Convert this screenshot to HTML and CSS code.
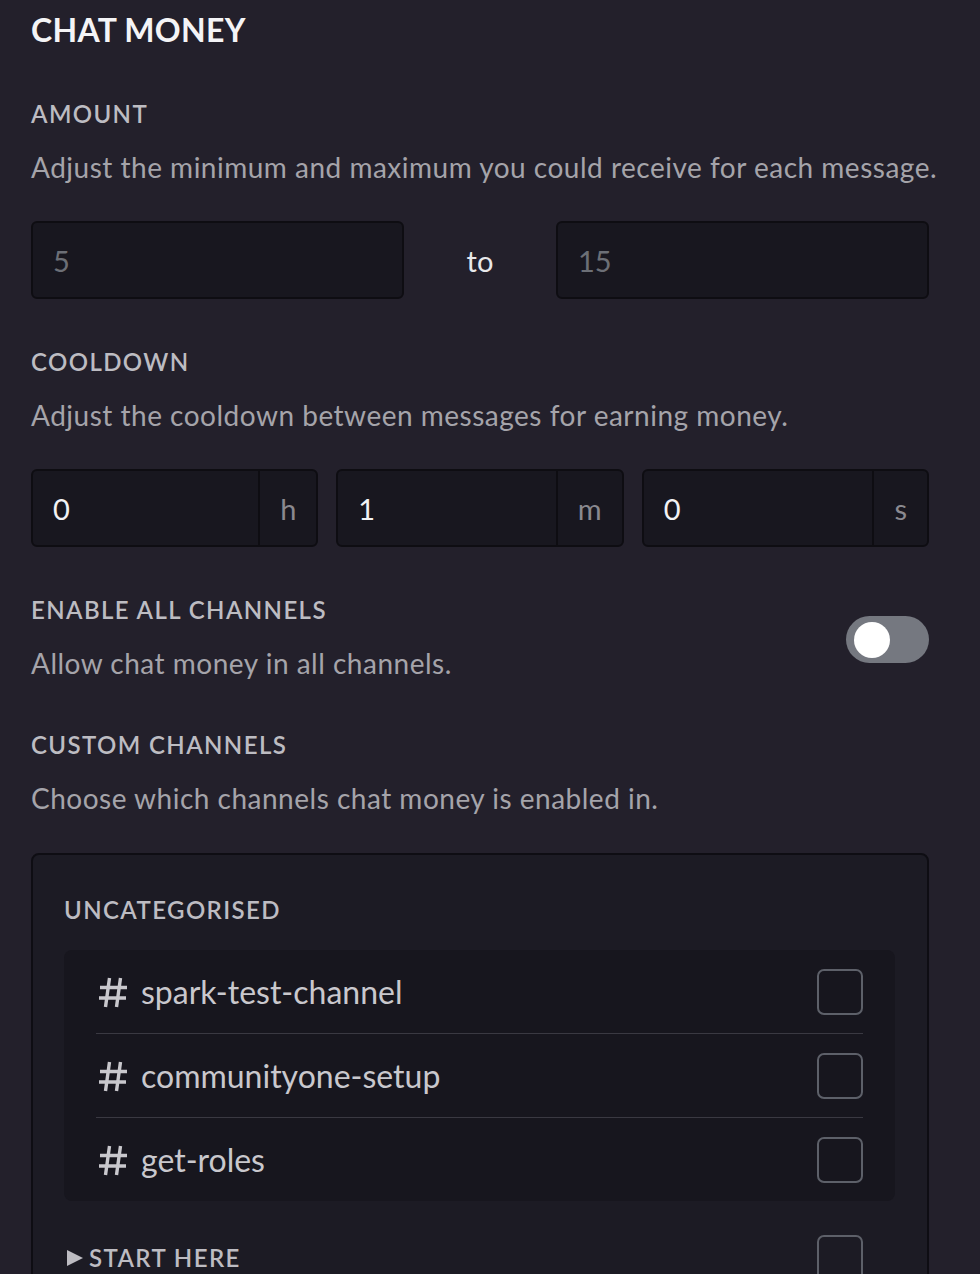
FILE: index.html
```html
<!DOCTYPE html>
<html lang="en">
<head>
<meta charset="utf-8">
<title>Chat Money</title>
<link rel="stylesheet" href="styles.css">
</head>
<body>
<div class="page">
  <h1 class="title">CHAT MONEY</h1>

  <section class="section first">
    <h2 class="label">AMOUNT</h2>
    <p class="desc">Adjust the minimum and maximum you could receive for each message.</p>
    <div class="range">
      <div class="field placeholder">5</div>
      <div class="to">to</div>
      <div class="field placeholder">15</div>
    </div>
  </section>

  <section class="section">
    <h2 class="label">COOLDOWN</h2>
    <p class="desc">Adjust the cooldown between messages for earning money.</p>
    <div class="times">
      <div class="group"><div class="gval">0</div><div class="gsuf">h</div></div>
      <div class="group"><div class="gval">1</div><div class="gsuf">m</div></div>
      <div class="group"><div class="gval">0</div><div class="gsuf">s</div></div>
    </div>
  </section>

  <section class="section toggle-row">
    <div class="toggle-text">
      <h2 class="label">ENABLE ALL CHANNELS</h2>
      <p class="desc last">Allow chat money in all channels.</p>
    </div>
    <div class="toggle"><div class="knob"></div></div>
  </section>

  <section class="section custom">
    <h2 class="label">CUSTOM CHANNELS</h2>
    <p class="desc">Choose which channels chat money is enabled in.</p>
    <div class="panel">
      <h3 class="cat">UNCATEGORISED</h3>
      <div class="list">
        <div class="row">
          <div class="chan"><svg class="hash" width="30" height="31" viewBox="0 0 30 31"><path d="M11.5 1 L7.5 30 M22.5 1 L18.5 30 M2 10.5 H29 M1 21 H28" stroke="#c9c8cd" stroke-width="3.4" fill="none"/></svg><span>spark-test-channel</span></div>
          <div class="check"></div>
        </div>
        <div class="row">
          <div class="chan"><svg class="hash" width="30" height="31" viewBox="0 0 30 31"><path d="M11.5 1 L7.5 30 M22.5 1 L18.5 30 M2 10.5 H29 M1 21 H28" stroke="#c9c8cd" stroke-width="3.4" fill="none"/></svg><span>communityone-setup</span></div>
          <div class="check"></div>
        </div>
        <div class="row">
          <div class="chan"><svg class="hash" width="30" height="31" viewBox="0 0 30 31"><path d="M11.5 1 L7.5 30 M22.5 1 L18.5 30 M2 10.5 H29 M1 21 H28" stroke="#c9c8cd" stroke-width="3.4" fill="none"/></svg><span>get-roles</span></div>
          <div class="check"></div>
        </div>
      </div>
      <div class="catrow">
        <div class="cat cat-collapsed"><svg class="tri" width="16" height="16" viewBox="0 0 16 16"><path d="M0 0 L16 8 L0 16 Z" fill="#bdbcc2"/></svg><span>START HERE</span></div>
        <div class="check"></div>
      </div>
    </div>
  </section>
</div>
</body>
</html>
```

FILE: styles.css
```css
html, body {
  margin: 0;
  padding: 0;
  background: #23202b;
}

body {
  font-family: Lato, "Open Sans", "DejaVu Sans", sans-serif;
  overflow: hidden;
}

.page {
  padding: 10px 51px 0 31px;
}

.title {
  margin: 0;
  font-size: 32px;
  line-height: 40px;
  font-weight: 700;
  color: #f4f4f6;
  letter-spacing: 0.3px;
}

.section {
  margin-top: 48px;
}

.section.first {
  margin-top: 49px;
}

.label {
  margin: 0 0 19px;
  font-size: 24px;
  line-height: 30px;
  font-weight: 600;
  letter-spacing: 1.4px;
  color: #bdbcc2;
}

.desc {
  margin: 0 0 35px;
  font-size: 28px;
  line-height: 38px;
  font-weight: 400;
  letter-spacing: 0.5px;
  color: #a5a4aa;
  white-space: nowrap;
}

.desc.last {
  margin-bottom: 0;
}

.range {
  display: flex;
  align-items: center;
}

.field {
  flex: 1;
  height: 78px;
  box-sizing: border-box;
  border: 2px solid #0e0d12;
  border-radius: 6px;
  background: #18171f;
  display: flex;
  align-items: center;
  padding-left: 20px;
  font-size: 29px;
}

.placeholder {
  color: #6c6f76;
}

.to {
  width: 152px;
  text-align: center;
  font-size: 29px;
  color: #e8e8ea;
}

.times {
  display: flex;
  gap: 18px;
}

.group {
  flex: 1;
  height: 78px;
  box-sizing: border-box;
  border: 2px solid #0e0d12;
  border-radius: 6px;
  background: #18171f;
  display: flex;
  font-size: 29px;
}

.gval {
  flex: 1;
  display: flex;
  align-items: center;
  padding-left: 20px;
  color: #f2f2f4;
}

.gsuf {
  border-left: 2px solid #0e0d12;
  padding: 0 20px;
  display: flex;
  align-items: center;
  color: #8a898f;
}

.toggle-row {
  display: flex;
  align-items: center;
  justify-content: space-between;
}

.toggle {
  width: 83px;
  height: 47px;
  border-radius: 24px;
  background: #757880;
  display: flex;
  align-items: center;
  padding-left: 8px;
  box-sizing: border-box;
  margin-top: 2px;
}

.knob {
  width: 36px;
  height: 36px;
  border-radius: 50%;
  background: #ffffff;
}

.custom .desc {
  margin-bottom: 36px;
}

.panel {
  border: 2px solid #0e0d13;
  border-radius: 8px;
  background: #1c1b24;
  padding: 40px 32px 40px 31px;
}

.cat {
  margin: 0 0 25px;
  font-size: 24px;
  line-height: 30px;
  font-weight: 600;
  letter-spacing: 1.4px;
  color: #bdbcc2;
}

.list {
  background: #17161e;
  border-radius: 8px;
  padding: 0 32px;
}

.row {
  height: 84px;
  box-sizing: border-box;
  display: flex;
  align-items: center;
  justify-content: space-between;
  border-bottom: 1px solid #3a3942;
}

.row:last-child {
  border-bottom: none;
  height: 83px;
}

.chan {
  display: flex;
  align-items: center;
  font-size: 32px;
  color: #c9c8cd;
  padding-left: 2px;
}

.hash {
  margin-right: 13px;
  margin-top: 2px;
}

.check {
  width: 46px;
  height: 46px;
  box-sizing: border-box;
  border: 2px solid #5d6069;
  border-radius: 7px;
}

.catrow {
  margin-top: 34px;
  display: flex;
  align-items: center;
  justify-content: space-between;
  padding-right: 32px;
}

.cat-collapsed {
  margin: 0;
  display: flex;
  align-items: center;
  padding-left: 3px;
}

.tri {
  margin-right: 6px;
}
```
